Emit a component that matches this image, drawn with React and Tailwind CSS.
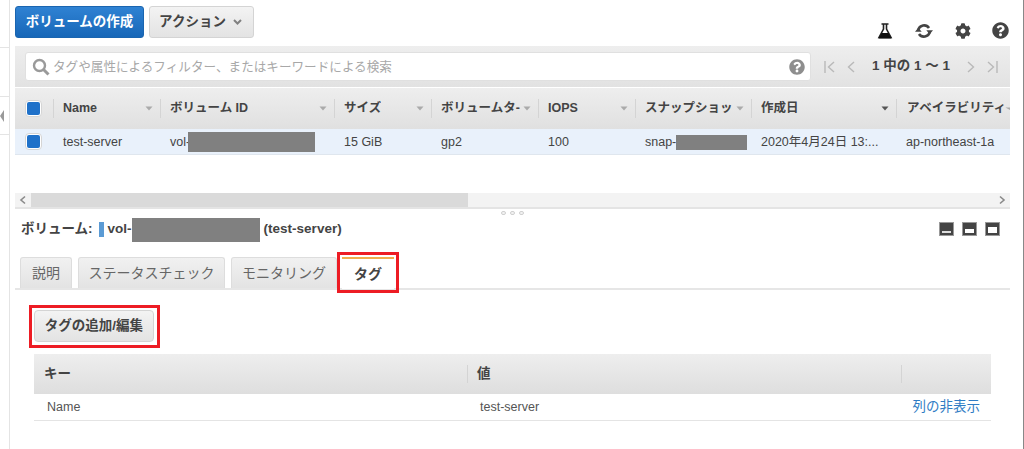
import React from "react";
import { FaCog, FaQuestionCircle } from "react-icons/fa";

const font = { fontFamily: '"Liberation Sans","Noto Sans CJK JP",sans-serif' };

function Caret({ dark, small }) {
  return (
    <svg width={small ? 5 : 8} height="5" viewBox={small ? "0 0 5 5" : "0 0 8 5"} className="shrink-0">
      <path d={small ? "M0.5 1.5H5V4Z" : "M0.5 0.5H7.5L4 4.5Z"} fill={dark ? "#555" : "#aaa"} />
    </svg>
  );
}

function Pager({ d, bar }) {
  return (
    <svg width="14" height="16" viewBox="0 0 14 16" fill="none" stroke="#b9b9b9" strokeWidth="1.4">
      {d === "l" ? <path d={bar ? "M2 2V14M11 3L5.5 8L11 13" : "M10 3L4.5 8L10 13"} /> : <path d={bar ? "M12 2V14M3 3L8.5 8L3 13" : "M4 3L9.5 8L4 13"} />}
    </svg>
  );
}

function Check() {
  return (
    <div className="w-[17px] h-[17px] rounded-[4px] bg-white border border-[#d5d5d5] flex items-center justify-center">
      <div className="w-[13px] h-[13px] rounded-[2px] bg-[#1f71c9]" />
    </div>
  );
}

function Redact({ w, h = "h-[15px]" }) {
  return <span className={`inline-block ${h} bg-[#808080] ${w}`} />;
}

function Head({ w, label, dark, gap, small }) {
  return (
    <div className={`${w} h-full flex items-center`}>
      <div className="h-[19px] w-px bg-[#d4d4d4] shrink-0" />
      <div className={`flex-1 min-w-0 flex items-center justify-between ${gap || "pl-[9px] pr-[7px]"}`}>
        <span className="font-bold text-[12.5px] text-[#444] whitespace-nowrap overflow-hidden">{label}</span>
        <Caret dark={dark} small={small} />
      </div>
    </div>
  );
}

function Cell({ w, children }) {
  return <div className={`${w} pl-[10px] pt-[1px] flex items-center text-[12.5px] text-[#444] whitespace-nowrap overflow-hidden`}>{children}</div>;
}

function Tab({ children, w }) {
  return (
    <div className={`${w} h-[31px] rounded-t-[3px] border border-b-0 border-[#ddd] bg-gradient-to-b from-[#f1f1f1] to-[#e3e3e3] flex items-center justify-center text-[14px] text-[#666]`}>
      {children}
    </div>
  );
}

function ModeIcon({ inner }) {
  return (
    <div className="w-[15px] h-[14px] bg-[#444] border border-[#999] flex flex-col justify-end px-[2px] pb-[2px]">
      <div className={inner} />
    </div>
  );
}

export default function App() {
  return (
    <div style={font} className="w-[1024px] h-[449px] bg-white flex overflow-hidden">
      <div className="w-[10px] h-full border-r border-[#e4e4e4] flex flex-col shrink-0">
        <div className="h-[48px] border-b border-[#e4e4e4]" />
        <div className="h-[49px] border-b border-[#e4e4e4]" />
        <div className="h-[38px] border-b border-[#e4e4e4] flex items-center">
          <svg width="4" height="12" viewBox="0 0 4 12"><path d="M4 0V12L0 6Z" fill="#999" /></svg>
        </div>
      </div>

      <div className="w-[1000px] ml-[5px] shrink-0">
        <div className="w-[995px]">
          {/* top buttons */}
          <div className="h-[46px] pt-[6px] flex items-start justify-between">
            <div className="flex gap-[5px]">
              <div className="w-[129px] h-[32px] rounded-[3px] bg-gradient-to-b from-[#2f82d3] to-[#1767b8] border border-[#1a65b0] flex items-center justify-center text-white font-bold text-[13.5px]">
                ボリュームの作成
              </div>
              <div className="w-[105px] h-[32px] rounded-[3px] bg-gradient-to-b from-[#f3f3f3] to-[#e3e3e3] border border-[#d4d4d4] flex items-center justify-center gap-[7px] pr-[2px] text-[#444] font-bold text-[13.5px]">
                アクション
                <svg width="9" height="6" viewBox="0 0 9 6" fill="none" stroke="#808080" strokeWidth="2"><path d="M1 1L4.5 4.5L8 1" /></svg>
              </div>
            </div>
            <div className="flex items-center gap-[21px] pt-[16px] pr-[1px]">
              <svg width="16" height="16" viewBox="0 0 16 16" fill="none" stroke="#222" strokeWidth="1.6">
                <path d="M4.5 1H11.5M6.5 1V6L2 14.5H14L9.5 6V1" />
                <path d="M4.5 10H11.5L14.5 15.5H1.5Z" fill="#111" stroke="none" />
              </svg>
              <svg width="20" height="16" viewBox="0 0 20 16" fill="none" stroke="#444" strokeWidth="2.6">
                <path d="M4.2 7A6 6 0 0 1 15 5" />
                <path d="M12.3 7.2H19L15.7 11.2Z" fill="#444" stroke="none" />
                <path d="M15.8 9A6 6 0 0 1 5 11" />
                <path d="M1 8.8H7.7L4.3 4.8Z" fill="#444" stroke="none" />
              </svg>
              <FaCog className="text-[16px] text-[#444]" />
              <FaQuestionCircle className="text-[17px] text-[#444]" />
            </div>
          </div>

          {/* filter bar */}
          <div className="h-[41px] bg-gradient-to-b from-[#eeeeee] to-[#e2e2e2] flex items-center pl-[10px]">
            <div className="w-[786px] h-[29px] bg-white rounded-[3px] border border-[#e0e0e0] flex items-center pl-[6px] pr-[5px]">
              <svg width="18" height="18" viewBox="0 0 18 18" fill="none" stroke="#9a9a9a" className="shrink-0">
                <circle cx="7.5" cy="7.5" r="5.5" strokeWidth="2.4" />
                <path d="M11.5 11.5L16.5 16.5" strokeWidth="3" />
              </svg>
              <span className="ml-[3px] pt-[1px] flex-1 text-[12.6px] text-[#a8a8a8] whitespace-nowrap">タグや属性によるフィルター、またはキーワードによる検索</span>
              <FaQuestionCircle className="text-[#8e8e8e] text-[16px]" />
            </div>
            <div className="flex items-center ml-[12px]">
              <Pager d="l" bar />
              <div className="ml-[7px]"><Pager d="l" /></div>
              <span className="ml-[14px] text-[13.5px] font-bold text-[#444] whitespace-nowrap">1 中の 1 ～ 1</span>
              <div className="ml-[14px]"><Pager d="r" /></div>
              <div className="ml-[7px]"><Pager d="r" bar /></div>
            </div>
          </div>

          {/* table header */}
          <div className="h-[41px] mt-px bg-gradient-to-b from-[#eeeeee] to-[#e0e0e0] flex items-center overflow-hidden">
            <div className="w-[38px] h-full pl-[10px] flex items-center shrink-0"><Check /></div>
            <Head w="w-[107px] shrink-0" label="Name" />
            <Head w="w-[174px] shrink-0" label="ボリューム ID" />
            <Head w="w-[97px] shrink-0" label="サイズ" />
            <Head w="w-[107px] shrink-0" label="ボリュームタ-" />
            <Head w="w-[97px] shrink-0" label="IOPS" />
            <Head w="w-[116px] shrink-0" label="スナップショッ" />
            <Head w="w-[145px] shrink-0" label="作成日" dark />
            <Head w="w-[114px] shrink-0" label="アベイラビリティ" gap="pl-[10px] pr-0" small />
          </div>

          {/* row */}
          <div className="h-[26px] bg-[#e9f1fb] border-b border-[#dfe6ee] flex overflow-hidden">
            <div className="w-[38px] pl-[10px] flex items-center shrink-0"><Check /></div>
            <Cell w="w-[107px] shrink-0">test-server</Cell>
            <Cell w="w-[174px] shrink-0">vol-<span className="-ml-[2px] flex"><Redact w="w-[127px]" h="h-[20px]" /></span></Cell>
            <Cell w="w-[97px] shrink-0">15 GiB</Cell>
            <Cell w="w-[107px] shrink-0">gp2</Cell>
            <Cell w="w-[97px] shrink-0">100</Cell>
            <Cell w="w-[116px] shrink-0">snap-<Redact w="w-[71px]" /></Cell>
            <Cell w="w-[145px] shrink-0">2020年4月24日 13:...</Cell>
            <Cell w="w-[114px] shrink-0">ap-northeast-1a</Cell>
          </div>

          {/* scrollbar */}
          <div className="mt-[38px] h-[16px] bg-[#f3f3f3] border-b-2 border-[#e4e4e4] flex items-center justify-between">
            <div className="w-[16px] h-full flex items-center justify-center">
              <svg width="8" height="10" viewBox="0 0 8 10" fill="none" stroke="#8a8a8a" strokeWidth="1.6"><path d="M6 1.5L2 5L6 8.5" /></svg>
            </div>
            <div className="flex-1 h-full"><div className="w-[437px] h-full bg-[#dadada]" /></div>
            <div className="w-[16px] h-full flex items-center justify-center">
              <svg width="8" height="10" viewBox="0 0 8 10" fill="none" stroke="#8a8a8a" strokeWidth="1.6"><path d="M2 1.5L6 5L2 8.5" /></svg>
            </div>
          </div>

          {/* splitter dots */}
          <div className="h-[5px] flex justify-center gap-[4px] pt-[2px]">
            <span className="w-[5px] h-[4px] rounded-full bg-[#f2f2f2] border border-[#d0d0d0]" />
            <span className="w-[5px] h-[4px] rounded-full bg-[#f2f2f2] border border-[#d0d0d0]" />
            <span className="w-[5px] h-[4px] rounded-full bg-[#f2f2f2] border border-[#d0d0d0]" />
          </div>

          {/* detail header */}
          <div className="h-[28px] mt-[1px] flex items-center justify-between pl-[6px] pr-[10px]">
            <div className="flex items-center pt-[1px] font-bold text-[13.5px] text-[#444] whitespace-nowrap">
              ボリューム:
              <span className="ml-[6px] w-[5px] h-[15px] bg-[#5b9bd5]" />
              <span className="ml-[4px]">vol-</span>
              <Redact w="w-[128px]" h="h-[24px]" />
              <span className="ml-[4px]">(test-server)</span>
            </div>
            <div className="flex gap-[8px] mb-[1px]">
              <ModeIcon inner="h-[2px] bg-[#ddd]" />
              <ModeIcon inner="h-[4px] bg-white" />
              <ModeIcon inner="h-[6px] bg-white" />
            </div>
          </div>

          {/* tabs */}
          <div className="mt-[14px] h-[33px] border-b-2 border-[#e6e6e6] pl-[5px] flex gap-[6px] items-start relative">
            <Tab w="w-[52px]">説明</Tab>
            <Tab w="w-[147px]">ステータスチェック</Tab>
            <Tab w="w-[106px]">モニタリング</Tab>
            <div className="w-[52px] h-[32px] -ml-[1px] border-t-2 border-[#f0ad4e] bg-white flex items-center justify-center font-bold text-[14px] text-[#444]">タグ</div>
            <div className="absolute left-[322px] -top-[5px] w-[62px] h-[41px] border-[3px] border-[#ed1c24]" />
          </div>

          {/* action */}
          <div className="mt-[20px] ml-[19px] relative w-[120px] h-[32px]">
            <div className="w-full h-full rounded-[4px] bg-gradient-to-b from-[#f3f3f3] to-[#e3e3e3] border border-[#d4d4d4] flex items-center justify-center font-bold text-[13.5px] text-[#444] whitespace-nowrap">
              タグの追加/編集
            </div>
            <div className="absolute -left-[5px] -top-[5px] -right-[6px] -bottom-[6px] border-[3px] border-[#ed1c24]" />
          </div>

          {/* tag table */}
          <div className="mt-[12px] ml-[19px] w-[957px]">
            <div className="h-[40px] bg-gradient-to-b from-[#eeeeee] to-[#dedede] flex items-center">
              <div className="w-[433px] pl-[10px] font-bold text-[13.5px] text-[#444]">キー</div>
              <div className="w-[434px] h-[18px] border-l border-[#d4d4d4] pl-[9px] flex items-center font-bold text-[13.5px] text-[#444]">値</div>
              <div className="h-[18px] border-l border-[#d4d4d4]" />
            </div>
            <div className="h-[27px] pt-[1px] border-b border-[#e4e4e4] flex items-center text-[12.5px] text-[#555]">
              <div className="w-[433px] pl-[13px]">Name</div>
              <div className="flex-1 pl-[13px]">test-server</div>
              <div className="pr-[11px] text-[13.5px] text-[#2f7cc4]">列の非表示</div>
            </div>
          </div>
        </div>
      </div>
      <div className="ml-auto w-[1px] h-full bg-[#888] shrink-0" />
    </div>
  );
}
